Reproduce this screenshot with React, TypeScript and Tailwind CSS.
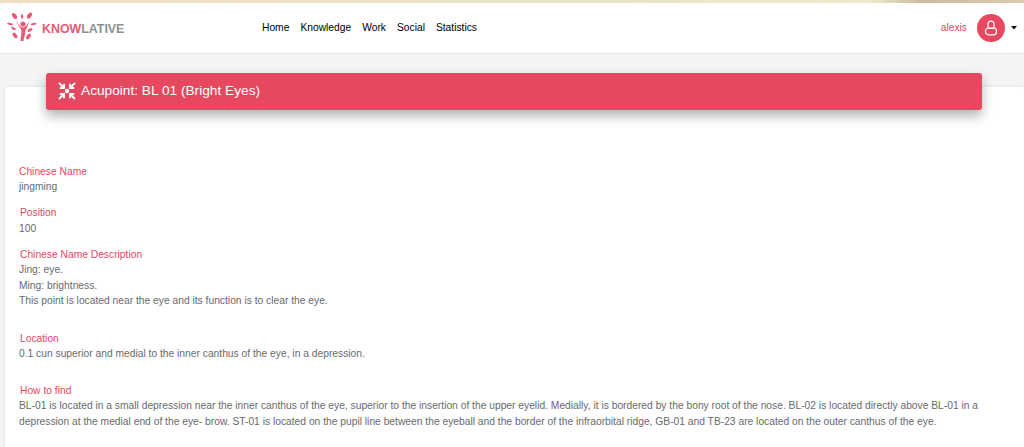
import React from 'react';

const Logo = () => (
  <svg width="30" height="30" viewBox="0 0 30 30" className="mt-[-2px] shrink-0">
    <g fill="#ea5a74">
      <ellipse cx="7.5" cy="4" rx="2" ry="3.4" transform="rotate(-35 7.5 4)" />
      <ellipse cx="15" cy="4.5" rx="1.2" ry="2.2" />
      <ellipse cx="22.5" cy="3.5" rx="2" ry="3.4" transform="rotate(35 22.5 3.5)" />
      <ellipse cx="3" cy="12" rx="1.1" ry="3" transform="rotate(-80 3 12)" />
      <ellipse cx="6.5" cy="16.5" rx="1.1" ry="2.6" transform="rotate(-60 6.5 16.5)" />
      <ellipse cx="26.5" cy="12" rx="1.1" ry="3" transform="rotate(80 26.5 12)" />
      <ellipse cx="23" cy="18" rx="1.3" ry="2.8" transform="rotate(60 23 18)" />
      <ellipse cx="8" cy="23.5" rx="1.8" ry="3.2" transform="rotate(-35 8 23.5)" />
      <ellipse cx="21.5" cy="24.5" rx="1.8" ry="3.2" transform="rotate(35 21.5 24.5)" />
      <circle cx="16" cy="12" r="2.6" />
      <path d="M9 8 C10.5 13 12.5 15.5 13.8 16.5 L14.5 20 C14 24 13.5 27 13.5 29 L16.5 29 C17 26 18.2 22 18.5 18 C20 16 21.5 12.5 22.5 9 C20.5 12.5 18.5 15.5 16 15.5 C13.5 15.5 11 12 9 8 Z" />
    </g>
  </svg>
);

const Field = ({ label, className, labelClassName, children }: { label: string; className?: string; labelClassName?: string; children: React.ReactNode }) => (
  <div className={className}>
    <div className={`text-[#e6485f] ${labelClassName ?? 'pl-px'}`}>{label}</div>
    <div className="text-[#666a70]">{children}</div>
  </div>
);

const AcupointIcon = () => (
  <svg width="20" height="20" viewBox="0 0 20 20" fill="none" stroke="#fff" strokeWidth="1.8" className="shrink-0">
    <circle cx="10" cy="10" r="2.2" fill="#fff" stroke="none" />
    <path d="M2 2 L7 7 M7 2.8 V7 H2.8" />
    <path d="M18 2 L13 7 M13 2.8 V7 H17.2" />
    <path d="M2 18 L7 13 M7 17.2 V13 H2.8" />
    <path d="M18 18 L13 13 M13 17.2 V13 H17.2" />
  </svg>
);

export default function App() {
  return (
    <div className="h-[447px] overflow-hidden bg-[#f4f4f4] font-['Liberation_Sans',Arial,sans-serif]">
      <div className="h-[3px] bg-[linear-gradient(90deg,#ecdfc4_0%,#f0e5cc_85%,#c9bca3_90%,#d8cbb2_100%)]" />
      <header className="flex h-[51px] items-center border-b border-[#e6e6e6] bg-white pl-[7px] pr-[7px]">
        <div className="flex w-[255px] items-center">
          <Logo />
          <span className="ml-[5px] pt-[3px] text-[12.4px] font-bold">
            <span className="text-[#ea5a74]">KNOW</span>
            <span className="text-[#8f8f92]">LATIVE</span>
          </span>
        </div>
        <nav className="flex gap-[11px] text-[10.27px] text-black">
          <span>Home</span>
          <span>Knowledge</span>
          <span>Work</span>
          <span>Social</span>
          <span>Statistics</span>
        </nav>
        <div className="ml-auto flex items-center">
          <span className="text-[10.27px] text-[#e6485f]">alexis</span>
          <div className="ml-[10px] flex h-[28px] w-[28px] items-center justify-center rounded-full bg-[#e6485f]">
            <svg width="14" height="16" viewBox="0 0 14 16" fill="none" stroke="#fff" strokeWidth="1.2">
              <path d="M4 7 V4.2 a3 3 0 0 1 6 0 V7" />
              <rect x="1.5" y="8" width="11" height="6.8" rx="3" />
              <path d="M4 7 C4 9 10 9 10 7" />
            </svg>
          </div>
          <svg width="6" height="4" viewBox="0 0 6 4" className="ml-[6px]">
            <path d="M0 0 H6 L3 3.5 Z" fill="#111" />
          </svg>
        </div>
      </header>

      <main className="ml-[5px] mt-[33px] h-[400px] rounded-[3px] bg-white text-[10.27px] leading-[15.4px] shadow-[0_0_3px_rgba(0,0,0,0.12)]">
        <div className="relative ml-[41px] mr-[42px] flex h-[37px] -translate-y-[14px] items-center gap-[4px] rounded-[3px] bg-[#e6485f] pb-[2px] pl-[11px] text-[13.7px] text-white shadow-[0_6px_12px_rgba(0,0,0,0.3)]">
          <AcupointIcon />
          <span>Acupoint: BL 01 (Bright Eyes)</span>
        </div>
        <div className="pl-[14px] pr-[10px] pt-[40px]">
          <Field label="Chinese Name" labelClassName="pl-0">jingming</Field>
          <Field label="Position" className="mt-[10.6px]">100</Field>
          <Field label="Chinese Name Description" className="mt-[10.6px]">
            Jing: eye.
            <br />
            Ming: brightness.
            <br />
            This point is located near the eye and its function is to clear the eye.
          </Field>
          <Field label="Location" className="mt-[22.6px]">
            0.1 cun superior and medial to the inner canthus of the eye, in a depression.
          </Field>
          <Field label="How to find" className="mt-[21px]">
            BL-01 is located in a small depression near the inner canthus of the eye, superior to the insertion of the upper eyelid. Medially, it is bordered by the bony root of the nose. BL-02 is located directly above BL-01 in a depression at the medial end of the eye- brow. ST-01 is located on the pupil line between the eyeball and the border of the infraorbital ridge, GB-01 and TB-23 are located on the outer canthus of the eye.
          </Field>
        </div>
      </main>
    </div>
  );
}
